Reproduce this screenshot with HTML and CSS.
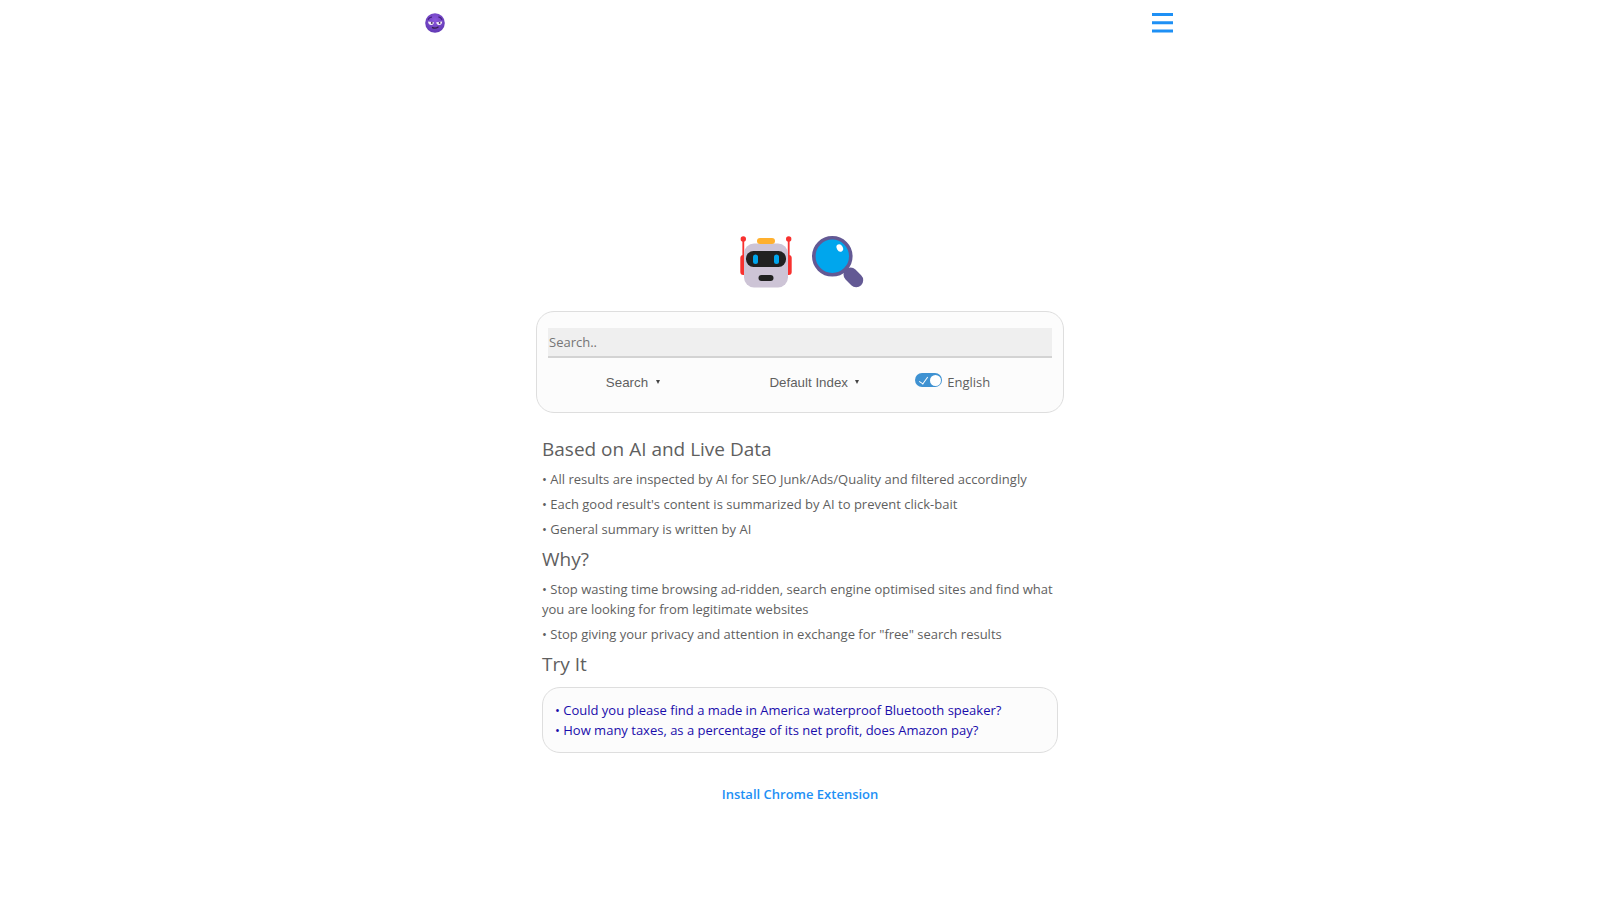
FILE: index.html
```html
<!DOCTYPE html>
<html lang="en">
<head>
<meta charset="utf-8">
<meta name="viewport" content="width=device-width, initial-scale=1">
<title>AI Search</title>
<link rel="stylesheet" href="styles.css">
</head>
<body>
<header class="topbar">
  <a class="logo" href="#" aria-label="Home">
    <svg viewBox="0 0 20 20" width="20" height="20">
      <defs>
        <radialGradient id="face" cx="50%" cy="35%" r="65%">
          <stop offset="0" stop-color="#8b58dc"/>
          <stop offset="1" stop-color="#6239b4"/>
        </radialGradient>
      </defs>
      <circle cx="10" cy="10" r="9.8" fill="url(#face)"/>
      <path d="M3 6.6 Q4.5 4 7 4.2 M13.4 3.8 Q16 4.2 17 6.8" fill="none" stroke="#42207c" stroke-width="1.2"/>
      <path d="M3 8.6l6 .6q-.4 2.8-3 2.8T3 8.6zM11.2 9.2l6-.6q-.2 3.4-2.9 3.4t-3.1-2.8z" fill="#f4edf8"/>
      <circle cx="6.8" cy="9.9" r=".9" fill="#38204f"/>
      <circle cx="14.6" cy="9.9" r=".9" fill="#38204f"/>
      <path d="M7 14.4 Q10.5 16.2 13.5 13.8" fill="none" stroke="#38204f" stroke-width="1.2"/>
    </svg>
  </a>
  <button class="menu" type="button" aria-label="Menu">
    <svg viewBox="0 0 21 20" width="21" height="20">
      <path d="M0 1.5h21M0 9.7h21M0 17.9h21" stroke="#1e90f5" stroke-width="3"/>
    </svg>
  </button>
</header>

<main class="page">
  <div class="hero">
    <svg viewBox="0 0 52 52" width="52" height="52" role="img" aria-label="Robot">
      <path d="M3.3 4v18M48.7 4v18" stroke="#f8312f" stroke-width="1.8"/>
      <circle cx="3.3" cy="3" r="2.7" fill="#f8312f"/>
      <circle cx="48.7" cy="3" r="2.7" fill="#f8312f"/>
      <rect x=".3" y="19" width="8" height="20" rx="3" fill="#f8312f"/>
      <rect x="43.7" y="19" width="8" height="20" rx="3" fill="#f8312f"/>
      <rect x="4" y="7.5" width="44" height="44" rx="10" fill="#cdc4d6"/>
      <rect x="17" y="2" width="18" height="6" rx="3" fill="#ffb02e"/>
      <rect x="6" y="15" width="40" height="16" rx="7.5" fill="#212121"/>
      <rect x="13" y="18.5" width="5" height="9.5" rx="2.5" fill="#00a6ed"/>
      <rect x="34" y="18.5" width="5" height="9.5" rx="2.5" fill="#00a6ed"/>
      <rect x="18.5" y="39" width="15" height="6" rx="3" fill="#212121"/>
    </svg>
    <svg viewBox="0 0 52 52" width="52" height="52" role="img" aria-label="Magnifying glass">
      <path d="M32 32l5 5" stroke="#635994" stroke-width="4"/>
      <path d="M38.5 38.5l5.7 5.7" stroke="#635994" stroke-width="14" stroke-linecap="round"/>
      <circle cx="20.3" cy="20.3" r="18.5" fill="#00a6ed" stroke="#635994" stroke-width="3.6"/>
      <ellipse cx="27.8" cy="12" rx="3" ry="3.9" fill="#fff" transform="rotate(-30 27.8 12)"/>
    </svg>
  </div>

  <form class="card search">
    <input class="query" type="text" placeholder="Search.." aria-label="Search">
    <div class="options">
      <span class="picker"><select aria-label="Mode"><option>Search</option></select></span>
      <span class="picker"><select aria-label="Index"><option>Default Index</option></select></span>
      <label class="lang"><input class="toggle" type="checkbox" checked><span>English</span></label>
    </div>
  </form>

  <section class="about">
    <h2>Based on AI and Live Data</h2>
    <p>• All results are inspected by AI for SEO Junk/Ads/Quality and filtered accordingly</p>
    <p>• Each good result's content is summarized by AI to prevent click-bait</p>
    <p>• General summary is written by AI</p>
    <h2>Why?</h2>
    <p>• Stop wasting time browsing ad-ridden, search engine optimised sites and find what you are looking for from legitimate websites</p>
    <p>• Stop giving your privacy and attention in exchange for "free" search results</p>
    <h2>Try It</h2>
    <div class="card samples">
      <a href="#">• Could you please find a made in America waterproof Bluetooth speaker?</a>
      <a href="#">• How many taxes, as a percentage of its net profit, does Amazon pay?</a>
    </div>
  </section>

  <a class="install" href="#">Install Chrome Extension</a>
</main>
</body>
</html>
```
FILE: styles.css
```css
* {
  box-sizing: border-box;
}

body {
  margin: 0;
  background: #fff;
  color: #5f5f5f;
  font-family: "Segoe UI", "Open Sans", sans-serif;
  font-size: 13px;
  line-height: 20px;
}

a {
  text-decoration: none;
}

svg {
  display: block;
}

.topbar {
  display: flex;
  justify-content: space-between;
  align-items: center;
  max-width: 750px;
  margin: 0 auto;
  padding: 13px 2px 12px 0;
}

.menu {
  padding: 0;
  border: 0;
  background: none;
  cursor: pointer;
}

.page {
  display: flex;
  flex-direction: column;
  align-items: center;
  max-width: 528px;
  margin: 0 auto;
  padding-top: 191px;
}

.hero {
  display: flex;
  gap: 20px;
  padding-left: 4px;
  margin-bottom: 23px;
}

.card {
  border: 1px solid #dedede;
  border-radius: 18px;
  background: #fcfcfc;
}

.search {
  width: 100%;
  padding: 16px 11px 18px;
}

.query {
  display: block;
  width: 100%;
  height: 30px;
  padding: 0 1px;
  border: 0;
  border-bottom: 2px solid #d3d3d3;
  border-radius: 0;
  background: #efefef;
  color: inherit;
  font: inherit;
  outline: 0;
}

.query::placeholder {
  color: #757575;
}

.options {
  display: grid;
  grid-template-columns: 170fr 194fr 141fr;
  align-items: center;
  padding-top: 12px;
}

.picker {
  display: flex;
  justify-content: center;
  align-items: center;
  gap: 7px;
}

.picker select {
  appearance: none;
  padding: 0;
  border: 0;
  background: none;
  color: #5f5f5f;
  font-family: Arial, "Liberation Sans", sans-serif;
}

.picker::after {
  content: "";
  border: 2px solid transparent;
  border-top: 4px solid #444;
  border-bottom: 0;
}

.lang {
  display: flex;
  gap: 5px;
  padding: 2px 0 2px 4px;
}

.toggle {
  appearance: none;
  display: flex;
  justify-content: space-between;
  align-items: center;
  width: 27px;
  height: 14px;
  margin: 1px 0 0;
  padding: 0 1px 0 6px;
  border-radius: 7px;
  background: #3f92d2;
}

.toggle::before {
  content: "";
  width: 4px;
  height: 8px;
  margin-bottom: 2px;
  border: solid #fff;
  border-width: 0 1px 1px 0;
  transform: rotate(35deg);
}

.toggle::after {
  content: "";
  width: 11px;
  height: 11px;
  border-radius: 50%;
  background: #fff;
}

.about {
  width: 100%;
  padding: 21px 6px 0;
}

h2 {
  margin: 0;
  font-size: 19px;
  font-weight: 400;
  line-height: 30px;
}

p {
  margin: 5px 0;
}

.samples {
  display: flex;
  flex-direction: column;
  margin-top: 8px;
  padding: 12px;
}

.samples a {
  color: #1a0dab;
}

.install {
  margin-top: 31px;
  color: #1e90f5;
  font-weight: 600;
}
```
